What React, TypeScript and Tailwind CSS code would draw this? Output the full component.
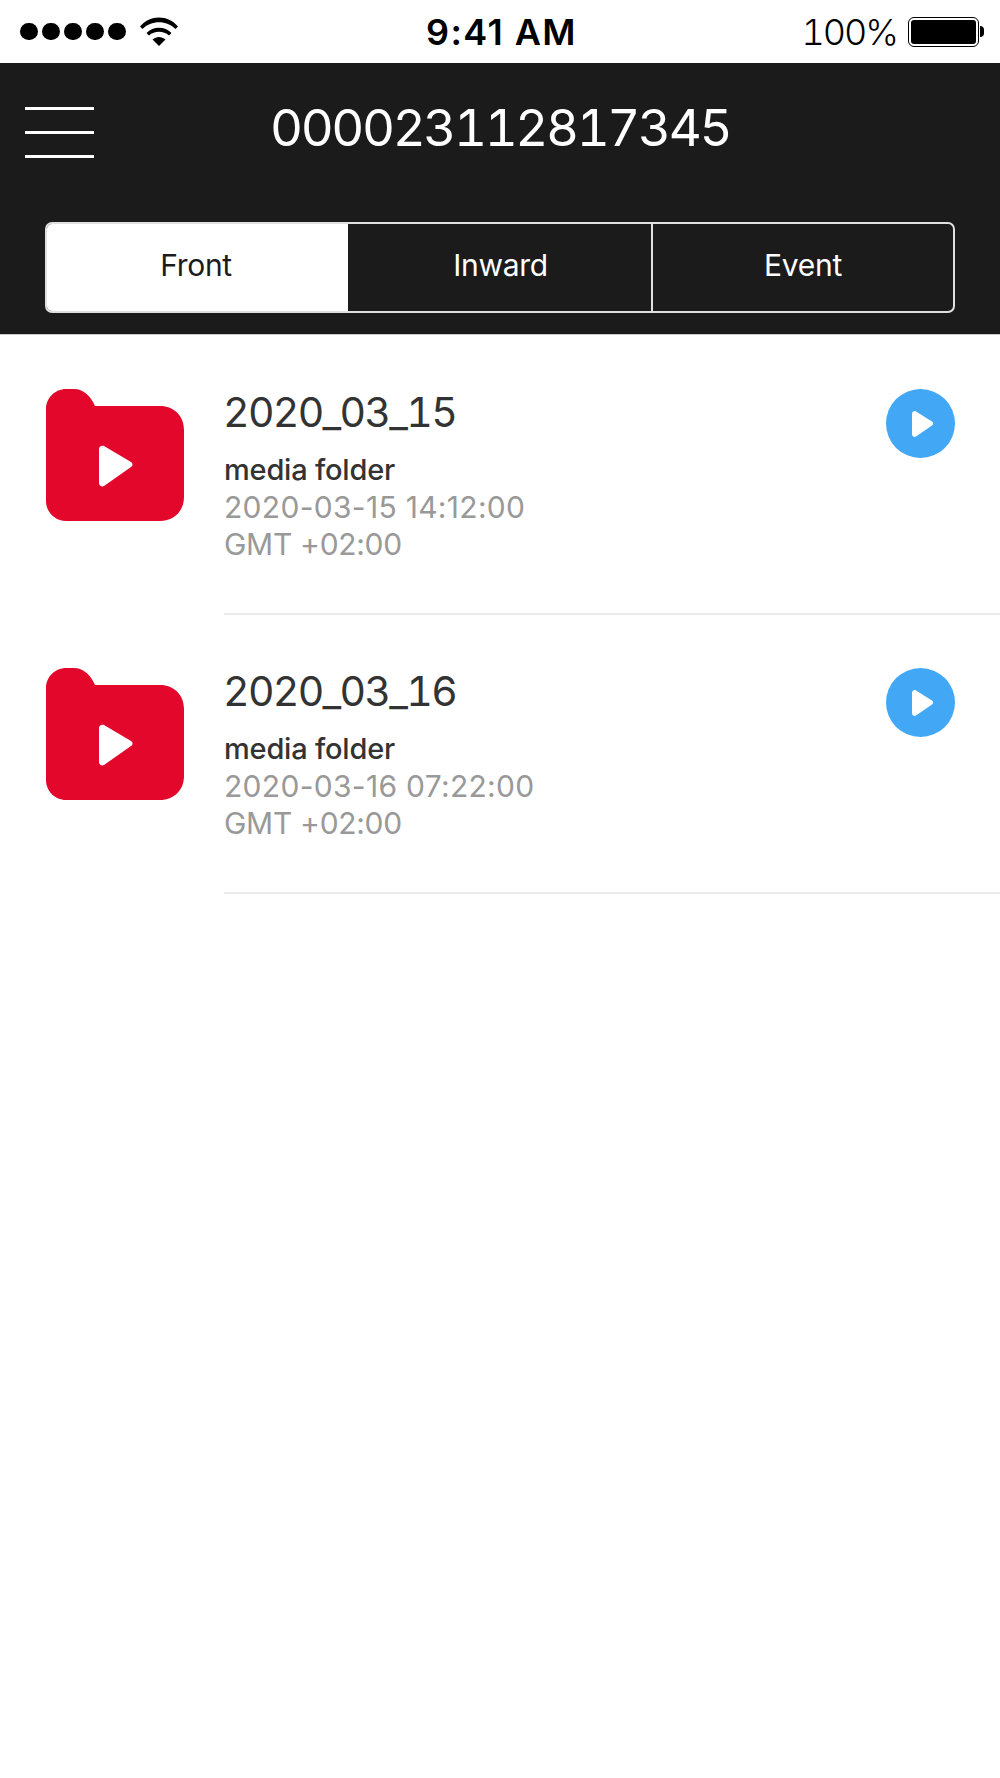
import React from 'react';

const font = { fontFamily: 'Inter, "Liberation Sans", sans-serif' };

const tabs = ['Front', 'Inward', 'Event'];

const items = [
  { name: '2020_03_15', date: '2020-03-15 14:12:00' },
  { name: '2020_03_16', date: '2020-03-16 07:22:00' },
];

const FolderIcon = () => (
  <svg width="138" height="132" viewBox="0 0 138 132" className="shrink-0">
    <path
      d="M0 20C0 9 9 0 20 0H28C37 0 45 7 49 17H114C128 17 138 27 138 41V108C138 122 128 132 114 132H20C9 132 0 123 0 112Z"
      fill="#E3072C"
    />
    <path d="M53 60C53 57 56 56 58 57L85 73C87 74 87 77 85 78L58 97C56 98 53 97 53 94Z" fill="#fff" />
  </svg>
);

const PlayButton = () => (
  <svg width="69" height="69" viewBox="0 0 69 69" className="shrink-0">
    <circle cx="34.5" cy="34.5" r="34.5" fill="#42A8F5" />
    <path d="M26 25C26 22.500 28.500 21.500 30 22.500L46 32.500C47.500 33.500 47.500 35.500 46 36.500L30 47.500C28.500 48.500 26 47.500 26 45Z" fill="#fff" />
  </svg>
);

const StatusBar = () => (
  <div className="relative flex h-[63px] items-center justify-between bg-white pl-[20px] pr-[16px] text-black">
    <div className="flex items-center">
      <div className="flex gap-[4.500px]">
        {[0, 1, 2, 3, 4].map((i) => (
          <span key={i} className="h-[17.500px] w-[17.500px] rounded-full bg-black" />
        ))}
      </div>
      <svg width="38" height="29" viewBox="0 0 38 29" className="ml-[14px]">
        <path d="M0 9.500C10 -2.500 28 -2.500 38 9.500L35.500 12C27 3 11 3 2.500 12Z" fill="#000" />
        <path d="M6.500 16C13 9 25 9 31.500 16L29 18.500C23.500 13.500 14.500 13.500 9 18.500Z" fill="#000" />
        <path d="M12.500 22.500C16.500 19 21.500 19 25.500 22.500L19 29Z" fill="#000" />
      </svg>
    </div>
    <div className="absolute left-[426px] top-[12px] text-[36px] font-semibold leading-[40px] tracking-[1.4px]">9:41 AM</div>
    <div className="flex items-center">
      <span className="text-[36px] font-light leading-[40px] tabular-nums tracking-[-2px]">100%</span>
      <div className="ml-[11px] flex h-[30px] w-[71px] rounded-[6px] border border-black p-[2px]">
        <div className="h-full w-full rounded-[3px] bg-black" />
      </div>
      <div className="ml-[1px] h-[11px] w-[4px] rounded-r-full bg-black" />
    </div>
  </div>
);

export default function App() {
  return (
    <div className="min-h-[1778px] w-[1000px] bg-white" style={font}>
      <StatusBar />
      <header className="h-[272px] border-b border-[#c8c8c8] bg-[#1b1b1b] px-[25px]">
        <div className="flex h-[159px] items-start">
          <div className="mt-[44px] flex w-[69px] flex-col gap-[21px]">
            <span className="h-[3px] bg-white" />
            <span className="h-[3px] bg-white" />
            <span className="h-[3px] bg-white" />
          </div>
          <h1 className="ml-[176px] mt-[33px] text-[51px] font-normal leading-[64px] tabular-nums tracking-[-2.4px] text-white">
            000023112817345
          </h1>
        </div>
        <div className="ml-[20px] flex h-[91px] w-[910px] overflow-hidden rounded-[7px] border-2 border-[#e0e0e0]">
          {tabs.map((tab, i) => (
            <div
              key={tab}
              className={
                i === 0
                  ? 'flex w-[301px] items-center justify-center bg-white pb-[6px] pr-[3px] text-[30px] leading-none tracking-[-0.3px] text-[#1b1b1b]'
                  : i === 1
                    ? 'flex w-[305px] items-center justify-center border-r-2 border-[#e0e0e0] pb-[6px] pl-[2px] text-[30px] leading-none tracking-[-0.3px] text-white'
                    : 'flex flex-1 items-center justify-center pb-[6px] text-[30px] leading-none tracking-[-0.3px] text-white'
              }
            >
              {tab}
            </div>
          ))}
        </div>
      </header>
      <main className="pt-[54px]">
        {items.map((item) => (
          <div key={item.name} className="h-[279px]">
            <div className="flex h-[224px] pl-[46px] pr-[45px]">
              <FolderIcon />
              <div className="ml-[40px] flex-1">
                <div className="-ml-[1px] -mt-[1px] text-[41px] leading-[48px] tabular-nums tracking-[-1.7px] text-[#333333]">{item.name}</div>
                <div className="mt-[15px] text-[29px] font-[450] leading-[38px] tracking-[-0.2px] text-[#333333]">media folder</div>
                <div className="text-[30px] leading-[37px] tracking-[0.3px] text-[#999999]">{item.date}</div>
                <div className="text-[30px] leading-[37px] tracking-[-0.3px] text-[#999999]">GMT +02:00</div>
              </div>
              <PlayButton />
            </div>
            <div className="ml-[224px] h-[2px] bg-[#ebebeb]" />
          </div>
        ))}
      </main>
    </div>
  );
}
